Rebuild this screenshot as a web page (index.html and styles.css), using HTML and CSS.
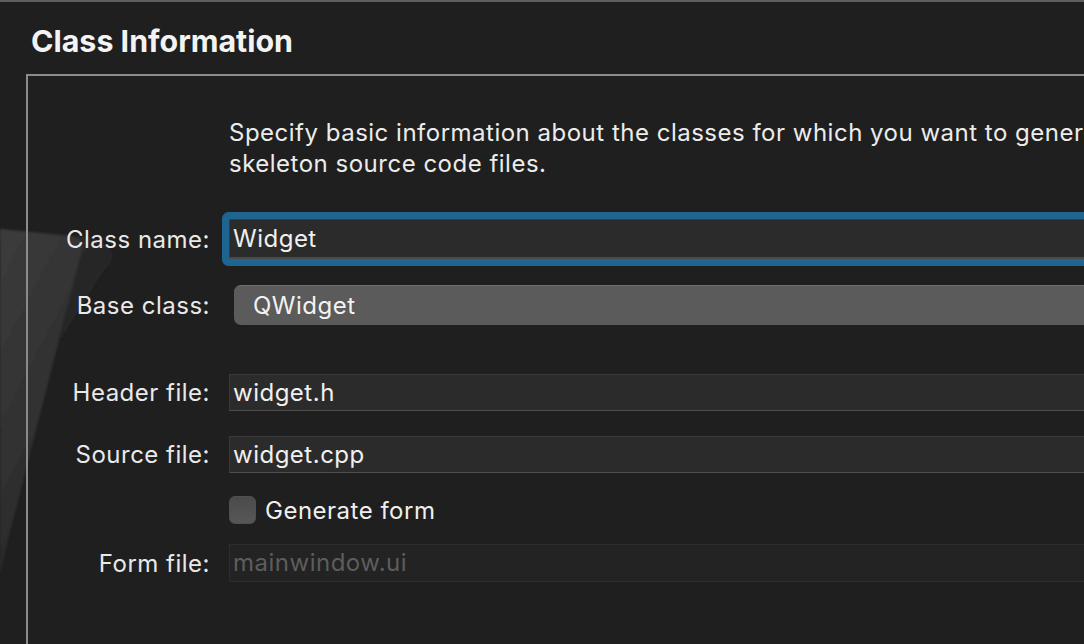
FILE: index.html
```html
<!DOCTYPE html>
<html lang="en">
<head>
<meta charset="utf-8">
<title>Class Information</title>
<link rel="stylesheet" href="styles.css">
</head>
<body>
<svg class="watermark" width="130" height="644" viewBox="0 0 130 644" aria-hidden="true">
  <defs>
    <linearGradient id="wm" x1="0" y1="0" x2="0.45" y2="1">
      <stop offset="0" stop-color="#3c3c3c"/>
      <stop offset="0.5" stop-color="#333333"/>
      <stop offset="1" stop-color="#272727"/>
    </linearGradient>
    <linearGradient id="wm2" x1="0" y1="0" x2="1" y2="1">
      <stop offset="0" stop-color="#2c2c2c"/>
      <stop offset="1" stop-color="#212121"/>
    </linearGradient>
    <filter id="soft" x="-10%" y="-10%" width="120%" height="120%">
      <feGaussianBlur stdDeviation="1"/>
    </filter>
  </defs>
  <path d="M76,236 Q104,238 112,252 Q114,262 104,270 L60,340 L80,252 Z" fill="url(#wm2)" filter="url(#soft)"/>
  <path d="M0,229 L72,236 Q84,238 82,250 L8,540 L0,575 Z" fill="url(#wm)" filter="url(#soft)"/>
</svg>
<header class="top">
  <h1 class="title">Class Information</h1>
</header>
<main class="panel">
  <p class="desc">Specify basic information about the classes for which you want to generate<br>skeleton source code files.</p>
  <div class="row row-class">
    <label class="label">Class name:</label>
    <div class="input focused">Widget</div>
  </div>
  <div class="row row-base">
    <label class="label">Base class:</label>
    <div class="combo">QWidget</div>
  </div>
  <div class="row row-header">
    <label class="label">Header file:</label>
    <div class="input">widget.h</div>
  </div>
  <div class="row row-source">
    <label class="label">Source file:</label>
    <div class="input">widget.cpp</div>
  </div>
  <div class="row row-check">
    <span class="label"></span>
    <span class="checkbox"></span>
    <span class="check-text">Generate form</span>
  </div>
  <div class="row row-form">
    <label class="label">Form file:</label>
    <div class="input disabled">mainwindow.ui</div>
  </div>
</main>
</body>
</html>
```
FILE: styles.css
```css
html, body {
  margin: 0;
  padding: 0;
  height: 100%;
  overflow: hidden;
}
body {
  position: relative;
  background: #1f1f1f;
  border-top: 2px solid #5e5e5e;
  box-sizing: border-box;
  font-family: Inter, "Noto Sans", "Liberation Sans", sans-serif;
  color: #e9e9e9;
}
.watermark {
  position: absolute;
  left: 0;
  top: -2px;
  z-index: 0;
}
.top {
  position: relative;
  z-index: 1;
  padding: 21px 0 0 31px;
  height: 51px;
}
.title {
  margin: 0;
  font-size: 30.4px;
  line-height: 36px;
  font-weight: 700;
  color: #f3f3f3;
}
.panel {
  position: relative;
  z-index: 1;
  margin-left: 26px;
  width: 1400px;
  height: 700px;
  border-left: 2px solid #8b8b8b;
  border-top: 2px solid #8b8b8b;
  box-sizing: border-box;
  padding-top: 41px;
  font-size: 24px;
  letter-spacing: 0.5px;
}
.desc {
  margin: 0 0 0 201px;
  font-size: 24px;
  line-height: 31px;
  color: #ececec;
  white-space: nowrap;
}
.row {
  display: flex;
  align-items: center;
  font-size: 24px;
}
.label {
  width: 182px;
  padding-right: 19px;
  text-align: right;
  flex: none;
  color: #e9e9e9;
}
.input {
  flex: 1;
  box-sizing: border-box;
  background: #2b2b2b;
  border-top: 1px solid #3a3a3a;
  border-bottom: 1px solid #4d4d4d;
  border-left: 1px solid #3a3a3a;
  padding-left: 3px;
  height: 37px;
  line-height: 35px;
  color: #f0f0f0;
}
.input.focused {
  height: 40px;
  line-height: 37px;
  border: 1px solid #3c3c3c;
  border-bottom: 2px solid #4a4a4a;
  border-radius: 2px;
  box-shadow: 0 0 0 7px #1e6591;
}
.input.disabled {
  background: #232323;
  border-top: 1px solid #2d2d2d;
  border-bottom: 1px solid #2f2f2f;
  border-left: 1px solid #2d2d2d;
  height: 38px;
  line-height: 36px;
  color: #5d5d5d;
}
.combo {
  flex: 1;
  margin-left: 5px;
  height: 40px;
  box-sizing: border-box;
  line-height: 39px;
  padding-left: 19px;
  background: #5b5b5b;
  border-top: 1px solid #6e6e6e;
  border-radius: 7px 0 0 7px;
  color: #f2f2f2;
}
.row-class { margin-top: 40px; }
.row-base { margin-top: 26px; }
.row-header { margin-top: 49px; }
.row-source { margin-top: 25px; }
.row-check { margin-top: 23px; height: 28px; }
.row-form { margin-top: 20px; }
.checkbox {
  width: 27px;
  height: 28px;
  box-sizing: border-box;
  border-radius: 6px;
  background: linear-gradient(#4b4b4b, #575757);
  border: 1px solid #4f4f4f;
  flex: none;
}
.check-text {
  margin-left: 9px;
  color: #efefef;
}
```
